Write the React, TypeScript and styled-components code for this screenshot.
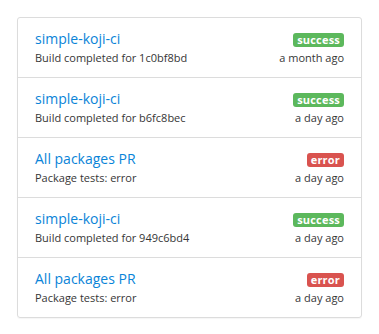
import styled, { createGlobalStyle } from 'styled-components'

const GlobalStyle = createGlobalStyle`
  body {
    margin: 0;
    background: #fff;
    font-family: 'Open Sans', 'Noto Sans', sans-serif;
  }
`

const Page = styled.div`
  padding: 17px;
  width: 345px;
`

const Card = styled.ul`
  list-style: none;
  margin: 0;
  padding: 0;
  border: 1px solid #dcdcdc;
  border-radius: 3px;
  box-shadow: 0 1px 1px rgba(0, 0, 0, 0.04);
`

const Row = styled.li`
  display: flex;
  justify-content: space-between;
  padding: 11px 17px 11px 17px;
  border-top: 1px solid #dcdcdc;
  &:first-child {
    border-top: 0;
  }
`

const Col = styled.div<{ $right?: boolean }>`
  display: flex;
  flex-direction: column;
  align-items: ${({ $right }) => ($right ? 'flex-end' : 'flex-start')};
`

const Title = styled.a`
  font-size: 14px;
  line-height: 20px;
  color: #0a84d8;
  text-decoration: none;
`

const Sub = styled.span`
  font-size: 11px;
  line-height: 17px;
  color: #363636;
`

const Badge = styled.span<{ $status: 'success' | 'error' }>`
  margin-top: 4px;
  margin-bottom: 2px;
  padding: 0 4px;
  height: 14px;
  line-height: 14px;
  border-radius: 3px;
  font-size: 11px;
  font-weight: 700;
  letter-spacing: 0.2px;
  color: #fff;
  background: ${({ $status }) => ($status === 'success' ? '#5cb85c' : '#d9534f')};
`

type Item = {
  title: string
  detail: string
  status: 'success' | 'error'
  when: string
}

const items: Item[] = [
  { title: 'simple-koji-ci', detail: 'Build completed for 1c0bf8bd', status: 'success', when: 'a month ago' },
  { title: 'simple-koji-ci', detail: 'Build completed for b6fc8bec', status: 'success', when: 'a day ago' },
  { title: 'All packages PR', detail: 'Package tests: error', status: 'error', when: 'a day ago' },
  { title: 'simple-koji-ci', detail: 'Build completed for 949c6bd4', status: 'success', when: 'a day ago' },
  { title: 'All packages PR', detail: 'Package tests: error', status: 'error', when: 'a day ago' },
]

export default function App() {
  return (
    <>
      <GlobalStyle />
      <Page>
        <Card>
          {items.map((it, i) => (
            <Row key={i}>
              <Col>
                <Title href="#">{it.title}</Title>
                <Sub>{it.detail}</Sub>
              </Col>
              <Col $right>
                <Badge $status={it.status}>{it.status}</Badge>
                <Sub>{it.when}</Sub>
              </Col>
            </Row>
          ))}
        </Card>
      </Page>
    </>
  )
}
